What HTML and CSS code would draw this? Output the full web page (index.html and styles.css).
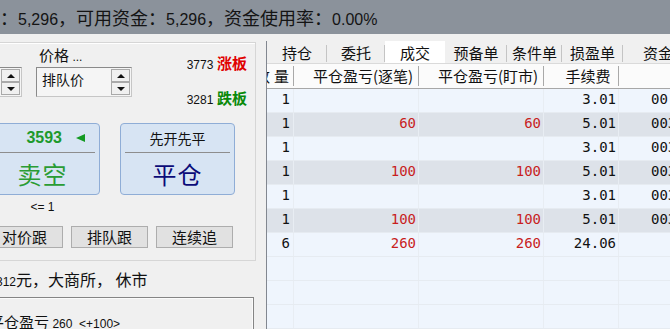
FILE: index.html
```html
<!DOCTYPE html>
<html lang="zh-CN">
<head>
    <meta charset="UTF-8">
    <title>交易 - 成交</title>
    <link rel="stylesheet" href="styles.css">
</head>
<body>
    <div class="topbar">：<span class="n">5,296</span>，可用资金：<span class="n">5,296</span>，资金使用率：<span class="n">0.00%</span></div>

    <div class="main">
        <div class="left">
            <div class="left-in">
                <div class="group">
                    <div class="price-row">
                        <div class="price-col">
                            <div class="price-label">价格 <span class="n">...</span></div>
                            <div class="inputs">
                                <div class="qty">
                                    <div class="spin"><div class="up-btn"></div><div class="down-btn"></div></div>
                                </div>
                                <div class="combo">
                                    <span class="combo-text">排队价</span>
                                    <div class="spin"><div class="up-btn"></div><div class="down-btn"></div></div>
                                </div>
                            </div>
                        </div>
                        <div class="limits">
                            <div><span class="n">3773</span> <b class="up">涨板</b></div>
                            <div><span class="n">3281</span> <b class="down">跌板</b></div>
                        </div>
                    </div>

                    <div class="bigbtns">
                        <div class="bigbtn">
                            <div class="top sell-top"><span class="last">3593</span><span class="arrow"></span></div>
                            <div class="big sell">卖空</div>
                        </div>
                        <div class="bigbtn">
                            <div class="top">先开先平</div>
                            <div class="big close">平仓</div>
                        </div>
                    </div>
                    <div class="hint">&lt;= 1</div>

                    <div class="smallbtns">
                        <div class="sbtn">对价跟</div>
                        <div class="sbtn">排队跟</div>
                        <div class="sbtn">连续追</div>
                    </div>
                </div>

                <div class="status"><span class="n">312</span>元，大商所， 休市</div>

                <div class="pnl">平仓盈亏 <span class="n">260&nbsp; &lt;+100&gt;</span></div>
            </div>
        </div>

        <div class="right">
            <div class="tabs">
                <div class="tab t1">持仓</div>
                <div class="tab t2">委托</div>
                <div class="tab t3 active">成交</div>
                <div class="tab t4">预备单</div>
                <div class="tab t5">条件单</div>
                <div class="tab t6">损盈单</div>
                <div class="tab t7">资金</div>
            </div>
            <div class="grid">
                <div class="hrow">
                    <div class="hc first">数量</div>
                    <div class="hc">平仓盈亏(逐笔)</div>
                    <div class="hc">平仓盈亏(盯市)</div>
                    <div class="hc">手续费</div>
                    <div class="hc last"></div>
                </div>
                <div class="row"><div>1</div><div></div><div></div><div>3.01</div><div class="tm">00</div></div>
                <div class="row alt"><div>1</div><div class="red">60</div><div class="red">60</div><div>5.01</div><div class="tm">003</div></div>
                <div class="row"><div>1</div><div></div><div></div><div>3.01</div><div class="tm">003</div></div>
                <div class="row alt"><div>1</div><div class="red">100</div><div class="red">100</div><div>5.01</div><div class="tm">003</div></div>
                <div class="row"><div>1</div><div></div><div></div><div>3.01</div><div class="tm">003</div></div>
                <div class="row alt"><div>1</div><div class="red">100</div><div class="red">100</div><div>5.01</div><div class="tm">003</div></div>
                <div class="row"><div>6</div><div class="red">260</div><div class="red">260</div><div>24.06</div><div class="tm"></div></div>
                <div class="row"><div></div><div></div><div></div><div></div><div></div></div>
                <div class="row"><div></div><div></div><div></div><div></div><div></div></div>
                <div class="row"><div></div><div></div><div></div><div></div><div></div></div>
            </div>
        </div>
    </div>
</body>
</html>
```

FILE: styles.css
```css
body {
    margin: 0;
    width: 670px;
    height: 329px;
    overflow: hidden;
    background: #f0f0f0;
    color: #111;
    font-family: "Noto Sans CJK SC", sans-serif;
}
.n {
    font-family: "Liberation Sans", sans-serif;
}
.topbar {
    height: 34px;
    background: #8b929b;
    font-size: 18px;
    line-height: 34px;
    white-space: nowrap;
    color: #141414;
}
.topbar .n {
    font-size: 16px;
}
.main {
    display: flex;
    height: 295px;
}

/* left order panel */
.left {
    width: 256px;
    flex: none;
    overflow: hidden;
}
.left-in {
    margin-left: -20px;
    width: 276px;
}
.group {
    margin-top: 8px;
    height: 217px;
    border: 1px solid #d6d6d6;
    box-shadow: inset 1px 1px 0 #fff;
}
.price-row {
    display: flex;
    justify-content: space-between;
    height: 54px;
}
.price-col {
    padding-top: 3px;
}
.price-label {
    margin-left: 58px;
    font-size: 15px;
    line-height: 18px;
    height: 18px;
}
.price-label .n {
    font-size: 12px;
}
.inputs {
    display: flex;
    margin-top: 3px;
}
.qty, .combo {
    height: 30px;
    box-sizing: border-box;
    border: 1px solid;
    border-color: #8a8a8a #c6c6c6 #c6c6c6 #8a8a8a;
    background: #f5f5f5;
    display: flex;
    justify-content: flex-end;
}
.qty {
    width: 40px;
    margin-left: 1px;
}
.combo {
    width: 96px;
    margin-left: 14px;
}
.combo-text {
    flex: 1;
    font-size: 14px;
    line-height: 20px;
    padding-left: 5px;
    padding-top: 1px;
}
.spin {
    width: 19px;
    margin: 0 1px;
    display: flex;
    flex-direction: column;
}
.up-btn, .down-btn {
    height: 13px;
    box-sizing: border-box;
    border: 1px solid #a9a9a9;
    background: #f0f0f0;
    display: flex;
    align-items: center;
    justify-content: center;
}
.up-btn {
    margin-top: 1px;
}
.up-btn::after, .down-btn::after {
    content: "";
    border-left: 4px solid transparent;
    border-right: 4px solid transparent;
}
.up-btn::after {
    border-bottom: 4px solid #111;
}
.down-btn::after {
    border-top: 4px solid #111;
}
.limits {
    padding-top: 11px;
    padding-right: 8px;
    display: flex;
    flex-direction: column;
    gap: 16px;
    text-align: right;
}
.limits div {
    line-height: 16px;
}
.limits .n {
    font-size: 12px;
}
.limits b {
    font-size: 15px;
}
.up {
    color: #e00000;
}
.down {
    color: #0a8a0a;
}
.bigbtns {
    display: flex;
    gap: 20px;
    margin-left: 4px;
    margin-top: 26px;
}
.bigbtn {
    width: 115px;
    height: 72px;
    box-sizing: border-box;
    border: 1px solid #8fadd6;
    border-radius: 4px;
    background: #d7e4f3;
    display: flex;
    flex-direction: column;
}
.bigbtn .top {
    height: 28px;
    margin: 0 4px;
    border-bottom: 1px solid #8d8d8d;
    display: flex;
    align-items: center;
    justify-content: center;
    font-size: 14px;
}
.sell-top {
    justify-content: flex-end !important;
    gap: 14px;
    padding-right: 10px;
}
.last {
    font-family: "Liberation Sans", sans-serif;
    font-weight: bold;
    font-size: 16px;
    color: #1d9a2c;
}
.arrow {
    border-right: 9px solid #139a22;
    border-top: 4px solid transparent;
    border-bottom: 4px solid transparent;
}
.bigbtn .big {
    flex: 1;
    display: flex;
    align-items: center;
    justify-content: center;
    font-size: 24px;
    letter-spacing: 1px;
}
.sell {
    color: #2a9c34;
}
.close {
    color: #0b0b78;
}
.hint {
    width: 115px;
    margin-left: 4px;
    margin-top: 5px;
    text-align: center;
    font-family: "Liberation Sans", sans-serif;
    font-size: 12px;
    line-height: 14px;
}
.smallbtns {
    display: flex;
    gap: 8px;
    margin-left: 5px;
    margin-top: 12px;
}
.sbtn {
    width: 77px;
    height: 22px;
    box-sizing: border-box;
    border: 1px solid #adadad;
    background: #e1e1e1;
    font-size: 15px;
    line-height: 20px;
    text-align: center;
}
.status {
    margin-top: 8px;
    padding-left: 16px;
    font-size: 16px;
    line-height: 20px;
    white-space: nowrap;
}
.status .n {
    font-size: 12px;
}
.pnl {
    margin-top: 5px;
    width: 274px;
    height: 40px;
    box-sizing: border-box;
    border: 1px solid #858585;
    box-shadow: inset -1px 1px 0 #fbfbfb;
    padding: 15px 0 0 8px;
    font-size: 15px;
    line-height: 18px;
    white-space: nowrap;
}
.pnl .n {
    font-size: 12px;
}

/* right trade list */
.right {
    margin-left: 10px;
    margin-top: 7px;
    width: 404px;
    flex: none;
    display: flex;
    flex-direction: column;
    overflow: hidden;
}
.tabs {
    display: flex;
    height: 22px;
    border-left: 1px solid #828790;
    font-size: 15px;
    white-space: nowrap;
}
.tab {
    flex: none;
    text-align: center;
    padding-top: 2px;
    line-height: 20px;
    background: linear-gradient(#c4c4c4, #c4c4c4) right 4px / 1px 17px no-repeat;
}
.tab.active {
    background: #fff;
}
.t1 { width: 60px; }
.t2 { width: 58px; }
.t3 { width: 60px; }
.t4 { width: 62px; }
.t5 { width: 55px; }
.t6 { width: 61px; }
.t7 { width: 60px; text-align: left; padding-left: 20px; background: none; }
.grid {
    flex: 1;
    border-left: 1px solid #828790;
    overflow: hidden;
}
.hrow, .row {
    display: grid;
    grid-template-columns: 27px 125px 125px 75px 120px;
}
.hrow {
    height: 26px;
    box-sizing: border-box;
    border-top: 1px solid #dadada;
    border-bottom: 1px solid #a7a7a7;
    background: #fbfbfb;
}
.hc {
    font-size: 15px;
    line-height: 24px;
    text-align: center;
    padding-left: 13px;
    white-space: nowrap;
    overflow: hidden;
    background: linear-gradient(#a9a9a9, #a9a9a9) right 2px / 1px 20px no-repeat;
}
.hc.first {
    display: flex;
    justify-content: flex-end;
    padding: 0 1px 0 0;
    letter-spacing: 4px;
}
.hc.last {
    background: none;
}
.row {
    height: 24px;
    box-sizing: border-box;
    border-bottom: 1px solid #e6ebf1;
    background: #eff5fd;
    font-family: "DejaVu Sans Mono", monospace;
    font-size: 14px;
    line-height: 21px;
}
.row.alt {
    background: #dde2e9;
}
.row div {
    text-align: right;
    padding-right: 2px;
    border-right: 1px solid #e8edf3;
    white-space: nowrap;
    overflow: hidden;
}
.row div:first-child {
    padding-right: 3px;
}
.row .tm {
    text-align: left;
    padding-left: 32px;
    border-right: none;
}
.red {
    color: #c81e1e;
}
```
